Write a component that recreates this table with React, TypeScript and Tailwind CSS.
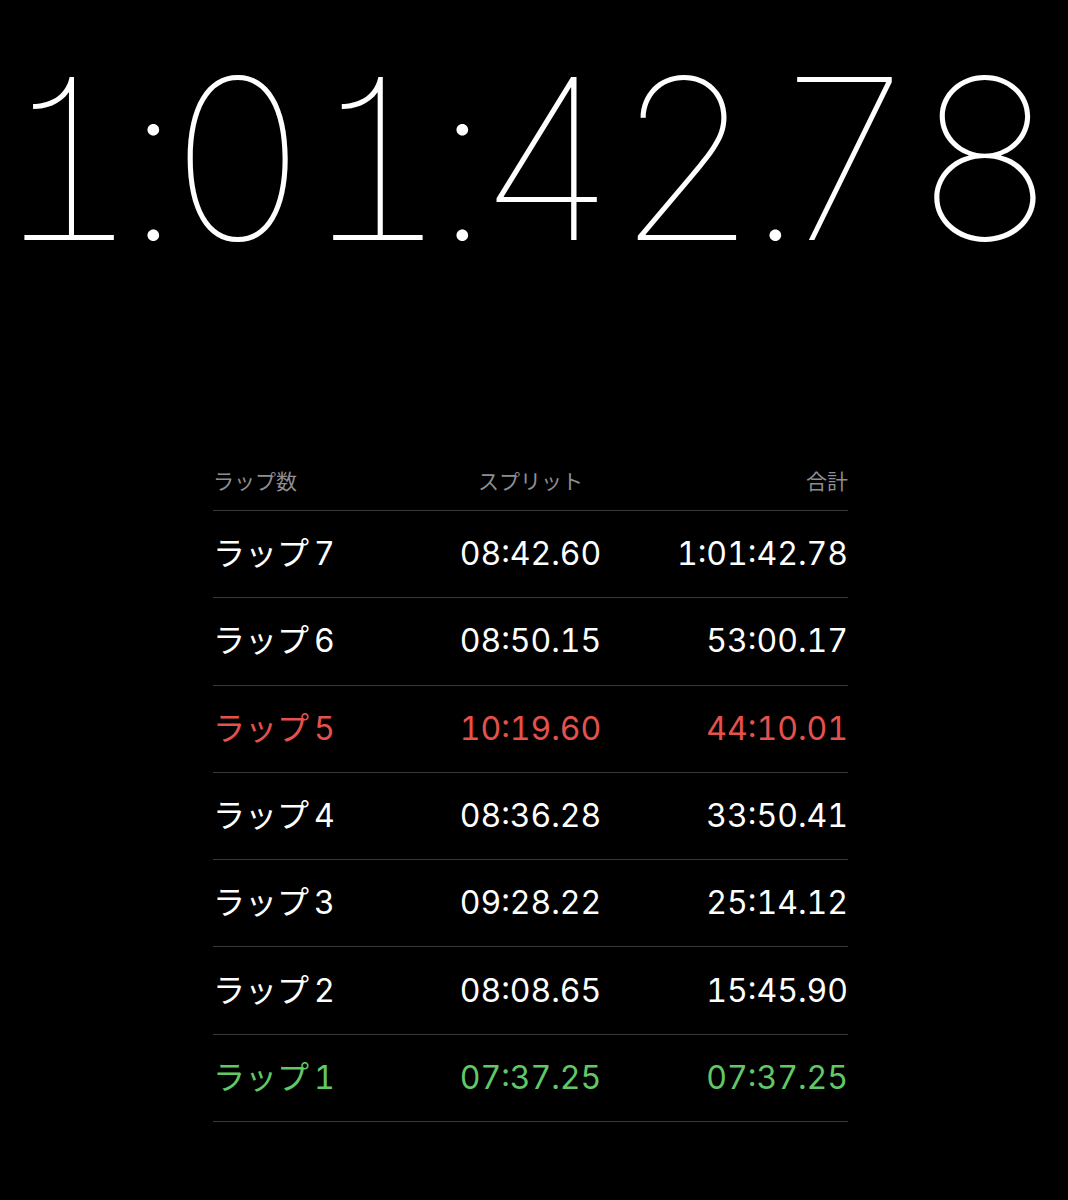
const laps = [
  { no: "7", split: "08:42.60", total: "1:01:42.78", tone: "text-white" },
  { no: "6", split: "08:50.15", total: "53:00.17", tone: "text-white" },
  { no: "5", split: "10:19.60", total: "44:10.01", tone: "text-[#e5524b]" },
  { no: "4", split: "08:36.28", total: "33:50.41", tone: "text-white" },
  { no: "3", split: "09:28.22", total: "25:14.12", tone: "text-white" },
  { no: "2", split: "08:08.65", total: "15:45.90", tone: "text-white" },
  { no: "1", split: "07:37.25", total: "07:37.25", tone: "text-[#62c866]" },
];

export default function App() {
  return (
    <div className="min-h-[1200px] w-full bg-black font-['Inter','Noto_Sans_CJK_JP',sans-serif] text-white">
      {/* main timer: tabular digits, tightened separators */}
      <div className="flex h-[300px] items-start justify-center pr-[18px] pt-[47px]">
        <span className="whitespace-nowrap text-[224px] font-thin leading-none tabular-nums tracking-[-4px] [font-feature-settings:'cv01']">
          1<span className="mx-[-14px]">:</span>01<span className="mx-[-14px]">:</span>42
          <span className="ml-[-10px] mr-[-29px]">.</span>78
        </span>
      </div>

      {/* lap table */}
      <div className="ml-[213px] mt-[151px] w-[635px]">
        <div className="grid h-[60px] grid-cols-3 items-center border-b border-[#38383a] pt-[2px] text-[21px] text-[#8e8e93]">
          <span>ラップ数</span>
          <span className="text-center">スプリット</span>
          <span className="text-right">合計</span>
        </div>
        {laps.map((lap) => (
          <div
            key={lap.no}
            className={`grid h-[87.3px] grid-cols-3 items-center border-b border-[#38383a] text-[32px] tabular-nums ${lap.tone}`}
          >
            <span>
              ラップ<span className="ml-[5px]">{lap.no}</span>
            </span>
            <span className="text-center">{lap.split}</span>
            <span className="text-right">{lap.total}</span>
          </div>
        ))}
      </div>
    </div>
  );
}
